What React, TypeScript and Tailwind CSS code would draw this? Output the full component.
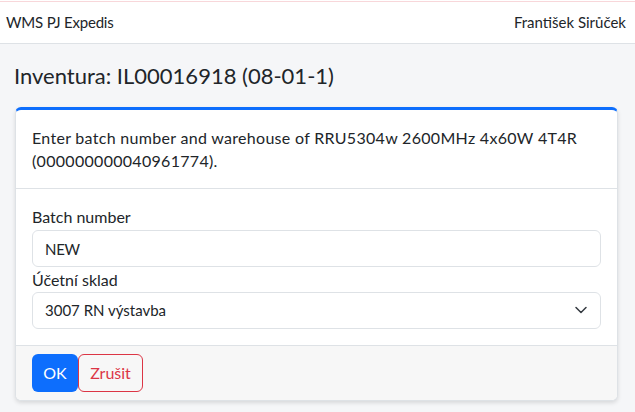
import { ChevronDown } from "lucide-react";

const App = () => {
  return (
    <div className="min-h-[412px] bg-[#f5f6f8] text-[#212529] font-['Lato',_'Noto_Sans',_sans-serif]">
      <nav className="h-[44px] bg-white border-b border-[#dee2e6] flex flex-col">
        <div className="mt-[1px] h-[1px] bg-[#f8d7da]" />
        <div className="flex-1 flex items-center justify-between pl-[6px] pr-[9px] text-[15px] leading-none">
          <span className="tracking-[-0.2px]">WMS PJ Expedis</span>
          <span>František Sirůček</span>
        </div>
      </nav>
      <h1 className="pl-[14px] pt-[18px] text-[22px] leading-[28px]">Inventura: IL00016918 (08-01-1)</h1>
      <div className="mt-[17px] ml-[15px] mr-[17px] bg-white rounded-[6px] border border-[#dee2e6] border-t-[3px] border-t-[#0d6efd] shadow-[0_2px_4px_rgba(0,0,0,0.12)] overflow-hidden">
        <div className="px-[16px] py-[16px] text-[16px] leading-[23px] tracking-[0.3px]">
          Enter batch number and warehouse of RRU5304w 2600MHz 4x60W 4T4R (000000000040961774).
        </div>
        <div className="border-t border-[#dee2e6] px-[16px] pt-[16px] pb-[16px] flex flex-col text-[16px]">
          <label className="leading-[23px] mb-[2px]">Batch number</label>
          <input
            className="h-[37px] border border-[#dee2e6] rounded-[6px] px-[12px] text-[15px] tracking-[-0.3px] outline-none"
            defaultValue="NEW"
          />
          <label className="leading-[23px] mt-[1px] mb-[1px]">Účetní sklad</label>
          <div className="relative">
            <select className="appearance-none w-full h-[37px] border border-[#dee2e6] rounded-[6px] px-[12px] text-[15px] bg-white outline-none">
              <option>3007 RN výstavba</option>
            </select>
            <ChevronDown className="absolute right-[10px] top-[8px] w-[20px] h-[20px] text-[#343a40] pointer-events-none" strokeWidth={1.8} />
          </div>
        </div>
        <div className="border-t border-[#dee2e6] bg-[#f7f7f7] px-[16px] py-[8px] flex">
          <button className="h-[38px] w-[46px] bg-[#0d6efd] text-white rounded-[6px] text-[16px]">OK</button>
          <button className="h-[38px] w-[65px] border border-[#dc3545] text-[#dc3545] rounded-[6px] text-[16px]">Zrušit</button>
        </div>
      </div>
    </div>
  );
};

export default App;
